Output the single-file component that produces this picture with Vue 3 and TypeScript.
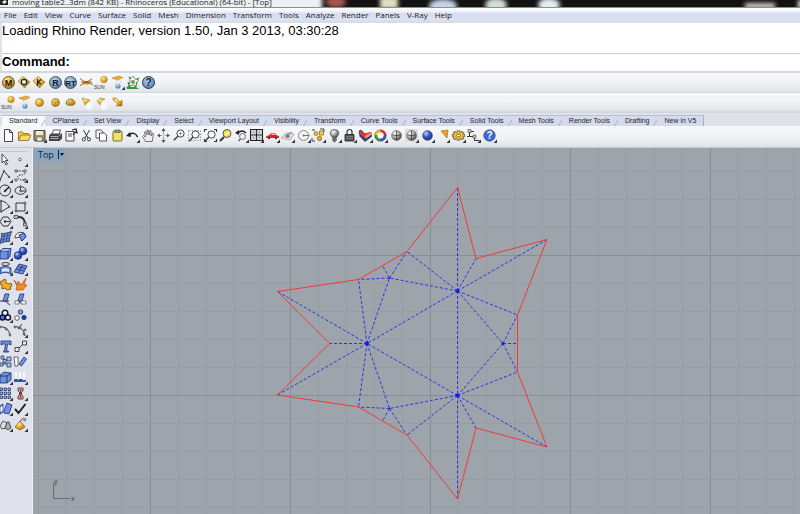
<script setup lang="ts">
interface Tool {
  name: string
  art: string
  fly?: boolean
}

const menus: string[] = ['File', 'Edit', 'View', 'Curve', 'Surface', 'Solid', 'Mesh', 'Dimension', 'Transform', 'Tools', 'Analyze', 'Render', 'Panels', 'V-Ray', 'Help']
const tabs: string[] = ['Standard', 'CPlanes', 'Set View', 'Display', 'Select', 'Viewport Layout', 'Visibility', 'Transform', 'Curve Tools', 'Surface Tools', 'Solid Tools', 'Mesh Tools', 'Render Tools', 'Drafting', 'New in V5']

const t = (name: string, art: string, fly = false): Tool => ({ name, art, fly })

const flyout = '<path d="M15 11.500v3.500h-3.500z" fill="#333"/>'
const draw = (tool: Tool): string => tool.art + (tool.fly ? flyout : '')

const ball = (fill: string, x = 7.5, y = 7.5, r = 4): string =>
  `<circle cx="${x}" cy="${y}" r="${r}" fill="url(#${fill})" stroke="#5d4a20" stroke-width=".4"/>`
const badge = (fill: string, label: string, size = 9): string =>
  `<circle cx="7.5" cy="7.5" r="6" fill="url(#${fill})" stroke="#3a3a38" stroke-width=".8"/><text x="7.5" y="10.7" text-anchor="middle" font-size="${size}" font-weight="700" fill="#181818">${label}</text>`
const gem = (inner: string): string =>
  `<path d="M1 6 6 1.5l7 5.5-5.500 6z" fill="url(#gold)" stroke="#9b7012" stroke-width=".6"/>${inner}`
const sun = `<circle cx="10" cy="4.500" r="3.300" fill="url(#gold)" stroke="#a87815" stroke-width=".4"/><text x="0" y="14" font-size="5" fill="#333">SUN</text>`
const lamp = `<path d="M2 3 9 1l4 1.500-6 2.500z" fill="#efae2b" stroke="#a97410" stroke-width=".5"/><path d="M8 4 5 8M9 4l2 4" stroke="#cbb98b" stroke-width=".5"/><circle cx="8" cy="11" r="2.600" fill="url(#blue)"/>`
const lens = (cx: number, cy: number): string =>
  `<circle cx="${cx}" cy="${cy}" r="3.600" fill="#f7fafc" stroke="#444" stroke-width="1"/><path d="m${cx - 2.7} ${cy + 2.7}-4 4" stroke="#444" stroke-width="1.600"/>`
const dots = (pts: number[][], r = 1.2): string =>
  pts.map(([x, y]) => `<circle cx="${x}" cy="${y}" r="${r}" fill="#eee" stroke="#333" stroke-width=".8"/>`).join('')

const renderTools: Tool[] = [
  t('V-Ray materials', badge('gold', 'M')),
  t('V-Ray options', gem('<circle cx="7" cy="7" r="2.700" fill="#eee" stroke="#222" stroke-width="1.200"/>')),
  t('V-Ray frame buffer', gem('<path d="m5.500 11 0-7M5.500 7.500 9 4.500M5.500 7 9 9" fill="none" stroke="#222" stroke-width="1.300"/>')),
  t('Render', badge('sky', 'R')),
  t('Real-time render', badge('sky', 'RT', 8)),
  t('Infinite plane', '<path d="m2 8 5-2 6 1-5 3z" fill="#e9a42b"/><path d="M1 3.500c3 3 9 5 13 6M13 4C9 6 5 9 1 10.500M2 7h11" fill="none" stroke="#7c5510" stroke-width=".8"/>'),
  t('Sun', sun),
  t('Dome light', lamp, true),
  t('Grass', '<path d="M1 14h13l-3-2H4z" fill="#2f9938"/><path d="M2 13 9 6m0 0 5-3M8 7 4 2m6 10 2-5M5 12 3 7" stroke="#35843a" stroke-width="1.300"/><path d="m5 4 3-3 2 3 4 1-3 3 1 3-4-1-4 1 1-4z" fill="#f4f5ec" stroke="#4f6f4d" stroke-width=".7"/><circle cx="8" cy="7" r="2" fill="#63a45b"/>'),
  t('Help', '<circle cx="7.500" cy="7.500" r="6" fill="url(#sky)" stroke="#26364c" stroke-width="1"/><text x="7.500" y="11" text-anchor="middle" font-size="10" font-weight="700" fill="#181c24">?</text>'),
]

const lightTools: Tool[] = [
  t('Sun light', sun),
  t('Dome', lamp),
  t('Omni light', ball('gold')),
  t('Sphere light', ball('gold') + '<path d="M4 6c2 2 5 2 7 0M7 3.500v8" fill="none" stroke="#a27516" stroke-width=".6"/>'),
  t('Hemisphere', '<path d="M3 8.500a4.500 4.500 0 0 1 9 0c-1 2.500-8 2.500-9 0z" fill="url(#gold)" stroke="#735414" stroke-width=".7"/><path d="M6 9V5.500M9 9V5.500" stroke="#87641a" stroke-width=".7"/>'),
  t('Spot light', '<circle cx="10" cy="11" r="3.500" fill="#f8f8f6"/><path d="M3 3l8 2-5 5z" fill="url(#gold)" stroke="#a87815" stroke-width=".5"/>'),
  t('IES light', '<circle cx="10" cy="11" r="3.500" fill="#f8f8f6"/><path d="M3 6 6 3l5 1-4 2-1 4z" fill="url(#gold)" stroke="#a87815" stroke-width=".5"/>'),
  t('Directional light', '<path d="M3 3h3l4 4 2-2v6H6l2-2-5-4z" fill="url(#gold)" stroke="#a87815" stroke-width=".6"/>'),
]

const mainTools: Tool[] = [
  t('New', '<path d="M3.500 1.500h5l3 3v9h-8zM8.500 1.500v3h3" fill="#fff" stroke="#333" stroke-width=".9"/>'),
  t('Open', '<path d="M1.500 12V4h4l1 1.500h5V7" fill="#f4cf4a" stroke="#8a6512" stroke-width=".8"/><path d="M1.500 12.500 4 7h10l-2.500 5.500z" fill="#f9d967" stroke="#8a6512" stroke-width=".8"/>'),
  t('Save', '<path d="M2 2.500h11v10.500H3l-1-1z" fill="#9e9760" stroke="#3c3b27" stroke-width=".9"/><path d="M4 3h7v4H4z" fill="#e8ead9"/><path d="M5 9h5v4H5z" fill="#eee" stroke="#444" stroke-width=".5"/>', true),
  t('Print', '<path d="m4 6 1.500-4h7L11 6" fill="#fff" stroke="#333" stroke-width=".8"/><path d="M1 7.500 3 5.500h11v5L11.500 13H1z" fill="#444"/><path d="M2.500 8.500h8M2.500 10.500h8M11 8l2-2" stroke="#bbb" stroke-width=".9"/>'),
  t('Document properties', '<path d="M3 3.500h8v9.500H3zM5 6h4M5 8h4" fill="#fff" stroke="#333" stroke-width=".9"/><path d="m9 2 4-1 1 4-2-1-2 3" fill="none" stroke="#222" stroke-width="1.200"/>'),
  t('Cut', '<path d="m4.500 2 4.500 8M10.500 2 6 10" stroke="#333" stroke-width="1"/><circle cx="4.800" cy="11.300" r="1.600" fill="none" stroke="#333" stroke-width=".9"/><circle cx="10" cy="11.300" r="1.600" fill="none" stroke="#333" stroke-width=".9"/>'),
  t('Copy', '<path d="M2 2h5l2 2v6H2z" fill="#fff" stroke="#444" stroke-width=".9"/><path d="M5.500 5h5l2 2v6h-7z" fill="#fff" stroke="#444" stroke-width=".9"/>'),
  t('Paste', '<rect x="3" y="3" width="9" height="10" rx="1" fill="#f3e365" stroke="#6d611f" stroke-width=".9"/><path d="M5 2h5v2.500H5z" fill="#999" stroke="#444" stroke-width=".6"/>'),
  t('Undo', '<path d="M4 7c3-3 7-2 8.500 2" fill="none" stroke="#222" stroke-width="1.500"/><path d="m1 8 4-4 1 5z" fill="#222"/>', true),
  t('Pan', '<path d="M4.500 13.500 1.500 8.500l1-1 2 1.500-1-5 1-.6L6 7l0-5h1.300l.7 5 1-4.500 1 .3L10 8l1.500-3 1 .5-1.300 8z" fill="#eee" stroke="#555" stroke-width=".8"/>'),
  t('Rotate view', '<path d="M7.500 1v13M2 7.500h11" stroke="#999"/><path d="m7.500 0 2 3h-4zM7.500 15l2-3h-4zM1 7.500l3-2v4zM14 7.500l-3-2v4z" fill="#555"/><circle cx="7.500" cy="7.500" r="1.500" fill="#ddd"/>'),
  t('Zoom dynamic', lens(8.5, 5.5) + '<path d="M7 5.500h3M8.500 4v3" stroke="#555" stroke-width=".6"/>'),
  t('Zoom window', '<path d="M1.500 2.500h12v10h-12z" fill="none" stroke="#777" stroke-dasharray="1.500 1.500" stroke-width=".7"/>' + lens(8.5, 6.5)),
  t('Zoom extents', '<path d="M1.500 4V1.500H4M11 1.500h2.500V4M13.500 11v2.500H11M4 13.500H1.500V11" fill="none" stroke="#333" stroke-width="1.100"/>' + lens(8.5, 6.5)),
  t('Zoom selected', '<path d="m2 13 4-4" stroke="#333" stroke-width="2"/><circle cx="9" cy="5.500" r="4" fill="#f4e23d" stroke="#555"/><path d="m7 7 4-3" stroke="#fff" stroke-width="1.200"/>'),
  t('Undo view', '<path d="M4 5c3-3 6-2 8 0" fill="none" stroke="#222" stroke-width="1.300"/><path d="m1 5 4-3v5z" fill="#222"/><circle cx="8.500" cy="8.500" r="3" fill="#eee" stroke="#555" stroke-width=".8"/><path d="m6.500 11-2 2" stroke="#555" stroke-width="1.300"/>', true),
  t('Four viewports', '<path d="M1.500 1.500h12v11h-12zM7.500 1.500v11M1.500 7h12" fill="#d6dadf" stroke="#222" stroke-width="1.100"/><path d="M4.500 2v10M10.500 2v10M2 4.300h11M2 9.700h11" stroke="#a2a6ab" stroke-width=".5"/>', true),
  t('Right view', '<path d="M1 8.500 4.500 7 6 5h4l1 2 3 1v2H1z" fill="#dc2321"/><path d="M6 7h4L9.500 5.500h-3z" fill="#f6c5c2"/><circle cx="4" cy="10" r="1.200" fill="#444"/><circle cx="11" cy="10" r="1.200" fill="#444"/>', true),
  t('Set CPlane', '<path d="m1 10 5-5 8 1-4 6z" fill="#ddd" stroke="#aaa" stroke-width=".8"/><path d="m3 8 9 1M5 11l5-6" stroke="#bbb" stroke-width=".8"/><circle cx="7.500" cy="8" r="1.500" fill="#a87575" stroke="#555" stroke-width=".6"/><path d="m8 6 4-2" stroke="#777"/>', true),
  t('Center snap', '<circle cx="7.500" cy="7.500" r="5" fill="none" stroke="#888" stroke-width="1"/><path d="M7.500 7.500h6" stroke="#777"/><circle cx="7.500" cy="7.500" r="1" fill="#777"/>', true),
  t('Select', '<path d="M1 2h3M9 1h4v3M1 10v3h3" fill="none" stroke="#444"/><path d="M8.500 3h4v4h-4z" fill="#f3cf40" stroke="#7b5d11" stroke-width=".7"/><circle cx="5" cy="5.500" r="1.900" fill="#f1c53a" stroke="#7b5d11" stroke-width=".7"/><circle cx="8.500" cy="10.500" r="2.200" fill="#e7ae2b" stroke="#7b5d11" stroke-width=".7"/>', true),
  t('Hide', '<path d="M5.500 9.500C1.500 5 3.500 1.500 7.500 1.500S13.500 5 9.500 9.500z" fill="url(#grey)" stroke="#555" stroke-width=".8"/><path d="M5.700 10.500h3.600v2L7.500 14l-1.800-1.500z" fill="#777" stroke="#333" stroke-width=".6"/>', true),
  t('Lock', '<path d="M5 7V4a2.500 2.500 0 0 1 5 0v3" fill="none" stroke="#333" stroke-width="1.200"/><path d="M3 6.500h9v6.500H3z" fill="#555" stroke="#222" stroke-width=".8"/><path d="M4 8.500h7M4 10.500h7" stroke="#999" stroke-width=".6"/>', true),
  t('Layers', '<path d="m1 3 2-1 4 4 6-1.500.5 4L7 13.500 2 8.500z" fill="#243d9e" stroke="#222" stroke-width=".6"/><path d="m1.500 3 1-.500L7 5.500l6-1.500v3L7.500 11 2 6z" fill="#e4372a"/><path d="m7 8 6-3.500v2.500L8 10.500z" fill="#f29a5c"/>', true),
  t('Object properties', '<circle cx="7.500" cy="7.500" r="4.500" fill="#fff" stroke="#e3272c" stroke-width="2.500"/><path d="M3 7.500a4.500 4.500 0 0 1 4.500-4.500" fill="none" stroke="#edcf27" stroke-width="2.500"/><path d="M3 7.500A4.500 4.500 0 0 0 7.500 12" fill="none" stroke="#23a551" stroke-width="2.500"/><path d="M7.500 12a4.500 4.500 0 0 0 4.500-4.500" fill="none" stroke="#315be0" stroke-width="2.500"/><circle cx="7.500" cy="7.500" r="5.800" fill="none" stroke="#333" stroke-width=".4"/>', true),
  t('Shade', ball('grey', 7.5, 7.5, 5) + '<path d="M7.500 2.500v10M3 6.500c2 1.500 7 1.500 9 0" fill="none" stroke="#333" stroke-width=".7"/>'),
  t('Shaded display', '<path d="M1 1h13v13H1z" fill="#dcdde0"/>' + ball('grey', 7.5, 7.5, 5) + '<path d="M7.500 2.500v10M3 6.500c2 1.500 7 1.500 9 0" fill="none" stroke="#333" stroke-width=".7"/>', true),
  t('Render preview', ball('royal', 7.5, 7.5, 5), true),
  t('Lights', '<path d="m6 3 7-1-1 8z" fill="#ef9b28" stroke="#9c6618" stroke-width=".6"/>', true),
  t('Options', '<g transform="translate(7.500 7.500) scale(1.200 .9)"><path d="M0-5.500v11M-5.500 0h11M-4-4l8 8M4-4l-8 8" stroke="#624710" stroke-width="3"/><path d="M0-5v10M-5 0h10M-3.700-3.700l7.400 7.400M3.700-3.700l-7.400 7.400" stroke="#e2ae38" stroke-width="1.700"/><circle r="3.700" fill="#e6bc4c"/><circle r="1.500" fill="#fff" stroke="#5a430f" stroke-width=".7"/></g>', true),
  t('Dimension', '<path d="M3.500 3.500v5h5v4h5M4 3.500h4M3 8.500H1" fill="none" stroke="#333" stroke-width="1"/><path d="M2 1.500h3v3H2zM7 7h3v3H7z" fill="#ccc" stroke="#444" stroke-width=".6"/>', true),
  t('Help topics', '<circle cx="7.500" cy="7.500" r="5.800" fill="#3f66d4" stroke="#34438a" stroke-width=".6"/><text x="7.500" y="11" text-anchor="middle" font-size="10" font-weight="700" fill="#fff">?</text>', true),
]

const B = 'fill="#6f91e2" stroke="#1b2c6c" stroke-width=".8"'
const L = 'fill="none" stroke="#333" stroke-width="1"'
const sideTools: Tool[] = [
  t('Pointer', '<path d="M4 2v9l2-2 2 4 1.500-1-2-3.500H10z" fill="#fff" stroke="#333" stroke-width=".9"/>'),
  t('Point', '<circle cx="7" cy="7.500" r="1.300" fill="#fff" stroke="#444" stroke-width=".8"/>', true),
  t('Polyline', `<path d="m2 12 4-9 6 7" ${L}/>` + dots([[2, 12], [6, 3], [11, 9]], 0.8), true),
  t('Control point curve', `<path d="M4 3h7c3 1 1 4-3 4s-5 3 0 5h3" ${L} stroke-dasharray="1.500 1"/>` + dots([[3, 3], [12, 3], [3, 12], [12, 12]]), true),
  t('Circle', `<circle cx="7" cy="7.500" r="5.500" ${L}/><path d="m7 8 4-4" stroke="#222" stroke-width="1.500"/><circle cx="7" cy="8" r="1.200" fill="#333"/>`, true),
  t('Ellipse', `<ellipse cx="7.500" cy="7.500" rx="5.500" ry="3.800" ${L}/><path d="M7.500 3v5h5" ${L}/>` + dots([[7.5, 3.5], [7.5, 8]], 0.8), true),
  t('Arc', `<path d="M3 2v11M3 2c4 0 7 3 8 6L3 13" ${L}/>` + dots([[3, 2], [3, 12.5], [11, 8]], 0.8), true),
  t('Rectangle', `<path d="M3 4h9v8H3z" ${L}/>` + dots([[3, 12], [12, 4]], 1), true),
  t('Polygon', `<path d="m5 3 5 0 3 4.500L10 12H5L2 7.500zM7 7.500h5" ${L}/><circle cx="7" cy="7.500" r="1.200" fill="#333"/>`, true),
  t('Curve fillet', '<path d="M2 3h4c5 0 6 4 6 8" fill="none" stroke="#333" stroke-width="2"/><path d="M1 1.500h4v3H1zM10.500 9h3v3h-3z" fill="#bbb" stroke="#333" stroke-width=".7"/>', true),
  t('Surface from points', `<path d="m4 4 9-2-2 9-9 2z" ${B}/><path d="M7 3 5 12M10 2.500 8 12M3 7l9-2M2.500 10l9-2" stroke="#2c417e" stroke-width=".7"/>` + dots([[4, 4], [13, 2], [11, 11], [2, 13]], 0.9), true),
  t('Patch', `<path d="M2 8C2 4 6 1 11 3l2 4-4 4-2-4z" fill="#fff" stroke="#333" stroke-width=".9"/><path d="m6 5 5-2 2 4-4 4z" ${B}/>`, true),
  t('Box', `<path d="m2 5 3-2.500h8l-1 8-2.500 2.500H2z" ${B}/><path d="M2 5h8v8M10 5l3-2.500" fill="none" stroke="#1b2c6c" stroke-width=".8"/><path d="M3 5 5.500 3h7L10 4.800z" fill="#a9c1fb"/>`, true),
  t('Spheres', '<circle cx="10" cy="5" r="3.800" fill="url(#royal)" stroke="#1b2c6c" stroke-width=".8"/><circle cx="5" cy="9.500" r="3.800" fill="url(#royal)" stroke="#1b2c6c" stroke-width=".8"/>', true),
  t('Extrude', `<path d="M2 7v6c3-2 7-2 11 0V7c-4-2-8-2-11 0z" ${B}/><ellipse cx="7.500" cy="3" rx="4" ry="1.500" ${L}/><path d="M4 8c2-1 5-1 7 0v3c-2-1-5-1-7 0z" fill="#dce6ff"/>`, true),
  t('Surface mesh', `<path d="m1 11 5-8 8 2-4 8z" ${B}/><path d="m3 8 8 2M4.500 5.500l8 2M5 12l5-8" stroke="#22346d" stroke-width=".8"/>`, true),
  t('Join', '<path d="M3 4h2l1-2 2 1v3l3 1 2-1 1 3-2 1 1 2-4 1-2-2-3 1V8L2 7z" fill="#f3aa24" stroke="#795313" stroke-width=".9"/>'),
  t('Explode', '<path d="m1 3 4 5V4l3 4 5-7-2 7 3 0-4 5H3L4 9z" fill="#f78d1c" stroke="#a34f0e" stroke-width=".7"/>'),
  t('Trim', `<path d="M2 9h9M7 9l5 4" ${L}/><path d="M7 2h4l-2 7H5z" ${B}/>`),
  t('Split', `<path d="M2 10h11" ${L}/><path d="M7 2h4L9 9H5z" ${B}/><path d="M2 9h4v3H2zM8 9h5v3H8z" fill="#fff" stroke="#333" stroke-width=".6"/>`),
  t('Group', '<circle cx="7" cy="5" r="2.800" fill="#fff" stroke="#15193c" stroke-width="1.500"/><circle cx="4.500" cy="9.500" r="2.500" fill="#5275d5" stroke="#15193c" stroke-width="1.500"/><circle cx="10" cy="9.500" r="2.500" fill="#fff" stroke="#15193c" stroke-width="1.500"/>', true),
  t('Ungroup', '<circle cx="7.500" cy="4" r="2.300" fill="#7398ed" stroke="#333" stroke-width=".8"/><circle cx="4" cy="10" r="2.300" fill="#fff" stroke="#333" stroke-width=".8"/><circle cx="11" cy="9.500" r="2.500" fill="#23398e"/>'),
  t('Edit points', `<path d="M2 4c5-1 9 3 10 8" ${L}/>` + dots([[2, 4], [8, 6], [12, 12]], 1)),
  t('Insert points', `<path d="M2 4c5-1 9 3 10 9M9 1 5 6" ${L}/>` + dots([[2, 4], [7, 5], [12, 7], [11, 11]], 1), true),
  t('Text', `<path d="M3 2h10v4l-2-1H9.500l-1 7h2v1h-5v-1h1l1-7H5L3 6z" ${B}/>`),
  t('Move', `<path d="m5 10 5-5" ${L}/><path d="M2 8.500h4v4H2zM9.500 2h4v4h-4z" fill="#eee" stroke="#333" stroke-width=".9"/>`, true),
  t('Copy objects', `<path d="M5 6h4M5 10h4" ${L}/><path d="M3 2h3v3H3zM9 3h4v4H9zM2 9h3v3H2zM9 9h4v4H9zM5 5.500h3v3H5z" fill="#a8c0f8" stroke="#29375e" stroke-width=".8"/>`),
  t('Rotate', `<path d="M1 3h4v9H2z" fill="#fff" stroke="#444" stroke-width=".8"/><path d="m6 10 5-7 2.500 2-5 7z" ${B}/>`),
  t('Scale', `<path d="m2 5 4-3 7 1v7l-4 3H2z" ${B}/><path d="M2 6h7v7M9 6l4-3" fill="none" stroke="#23376b"/>`, true),
  t('Analyze direction', '<path d="M3 2v7M7 2v7M11 2v7" stroke="#fff" stroke-width="1.500"/><path d="M1 11h12" stroke="#3759c9" stroke-width="2"/><path d="m1 9 2 3 2-3zM5.500 9l2 3 2-3z" fill="#354887"/>', true),
  t('Array', [2, 6, 10].map((x) => [2, 6, 10].map((y) => `<path d="M${x} ${y}h2.500v2.500h-2.500z" fill="#a8bcf0" stroke="#25355f" stroke-width=".8"/>`).join('')).join(''), true),
  t('Align', '<path d="M5 2h5v3l-1.500 1v3L10 10v3H5v-3l1.500-1V6L5 5z" fill="#ddd" stroke="#333" stroke-width=".9"/><path d="M7.500 3v10" stroke="#d1282a" stroke-width="1"/><path d="M6 4h3M6 11h3" stroke="#d1282a"/>', true),
  t('Bend', `<path d="m2 5 3-2v8l-3 2zM6 10l3-8 5 2-3 9-5-1z" ${B}/><path d="m2.500 6 2-1v5l-2 1z" fill="#fff"/>`, true),
  t('Check', '<path d="m2 8 3.500 4L12.500 3" fill="none" stroke="#222" stroke-width="2"/>', true),
  t('Primitives', '<path d="m2 9 3-5 4 2-1 5-4 1z" fill="#ddd" stroke="#333" stroke-width=".8"/><path d="m7 11 2-6h2l2 6-3 2z" fill="#aaa" stroke="#333" stroke-width=".8"/>', true),
  t('Cone', '<path d="m2 10 5-6 5 6-5 3z" fill="url(#gold)" stroke="#8b611b" stroke-width=".8"/><path d="M8 4c0-3 3-3 5-2l-1 2-2-1" fill="#ddd" stroke="#333" stroke-width=".8"/>', true),
]

const step = 28
const lineXs: number[] = Array.from({ length: 60 }, (_, i) => 38 + i * step)
const lineYs: number[] = Array.from({ length: 40 }, (_, i) => 171 + i * step)
const majorX = (i: number): boolean => i % 5 === 4
const majorY = (i: number): boolean => i % 5 === 3

const outline = '457.5,187.5 476,258.5 547,239.5 517.5,315 517.5,372 547,447 476,428 457.5,499 407,435 358.5,407 277.5,395 329.5,343.5 277.5,291.5 358.5,279.5 407,251.5'

const a = [457.5, 291]
const b = [457.5, 395.5]
const c = [367, 343.5]
const links = (from: number[], to: number[][]): string => to.map((p) => `M${from} L${p}`).join(' ')
const folds: string = [
  links(a, [[457.5, 187.5], [476, 258.5], [547, 239.5], [517.5, 315], [503, 343.5], b, c, [389.5, 278], [407, 251.5]]),
  links(b, [[457.5, 499], [476, 428], [547, 447], [517.5, 372], [503, 343.5], c, [389.5, 408.5], [407, 435]]),
  links(c, [[277.5, 291.5], [277.5, 395], [329.5, 343.5], [358.5, 279.5], [389.5, 278], [389.5, 408.5], [358.5, 407]]),
  links([389.5, 278], [[358.5, 279.5], [382.5, 265.5], [407, 251.5]]),
  links([389.5, 408.5], [[358.5, 407], [382.5, 421], [407, 435]]),
  links([503, 343.5], [[517.5, 315], [517.5, 343.5], [517.5, 372]]),
].join(' ')
const hubs: number[][] = [[...a, 2], [...b, 2], [...c, 2], [389.5, 278, 1], [389.5, 408.5, 1], [503, 343.5, 1.5]]
</script>

<template>
  <div class="app">
    <svg class="defs" aria-hidden="true">
      <defs>
        <radialGradient id="gold" cx=".35" cy=".3" r=".8"><stop offset="0" stop-color="#fff0a0" /><stop offset=".45" stop-color="#f0b32a" /><stop offset="1" stop-color="#a86c0c" /></radialGradient>
        <radialGradient id="sky" cx=".4" cy=".3" r=".8"><stop offset="0" stop-color="#b5d5f5" /><stop offset="1" stop-color="#3f73ad" /></radialGradient>
        <radialGradient id="blue" cx=".4" cy=".3" r=".8"><stop offset="0" stop-color="#bfe0f5" /><stop offset="1" stop-color="#2a6fa8" /></radialGradient>
        <radialGradient id="royal" cx=".35" cy=".3" r=".8"><stop offset="0" stop-color="#c3d4ff" /><stop offset=".4" stop-color="#3c62d6" /><stop offset="1" stop-color="#14246c" /></radialGradient>
        <radialGradient id="grey" cx=".35" cy=".3" r=".8"><stop offset="0" stop-color="#fff" /><stop offset=".5" stop-color="#a5a5a8" /><stop offset="1" stop-color="#2f2f32" /></radialGradient>
        <filter id="soft"><feGaussianBlur stdDeviation="2" /></filter>
      </defs>
    </svg>

    <header class="title">
      <svg class="backdrop" aria-hidden="true">
        <rect width="100%" height="8" fill="#121212" />
        <g filter="url(#soft)">
          <rect x="-10" y="-6" width="332" height="20" fill="#eef1f3" />
          <ellipse cx="336" cy="2" rx="10" ry="6" fill="#a6584e" />
          <rect x="380" y="-3" width="18" height="12" fill="#e4dfc0" />
          <ellipse cx="443" cy="6" rx="14" ry="7" fill="#c3d5e8" />
          <ellipse cx="496" cy="5" rx="11" ry="7" fill="#cfe0d2" />
          <ellipse cx="549" cy="5" rx="11" ry="7" fill="#e4eeee" />
          <rect x="745" y="3" width="30" height="6" fill="#cfc8c6" />
          <rect x="798" y="0" width="8" height="9" fill="#ddd" />
        </g>
        <path d="M0 0h8v5H0z" fill="#222" /><path d="m2 2 3-2 2 2-3 2z" fill="#eee" />
      </svg>
      <span class="title-text">moving table2..3dm (842 KB) - Rhinoceros (Educational) (64-bit) - [Top]</span>
    </header>

    <nav class="menu">
      <a v-for="m in menus" :key="m" href="#">{{ m }}</a>
    </nav>

    <section class="command">
      <div class="history">Loading Rhino Render, version 1.50, Jan  3 2013, 03:30:28</div>
      <label class="prompt">Command:<input type="text" /></label>
    </section>

    <div class="bar bar-render">
      <div class="tools ten">
        <button v-for="tool in renderTools" :key="tool.name" type="button" :aria-label="tool.name">
          <svg viewBox="0 0 15 15" v-html="draw(tool)" />
        </button>
      </div>
    </div>
    <div class="bar bar-light">
      <div class="tools eight">
        <button v-for="tool in lightTools" :key="tool.name" type="button" :aria-label="tool.name">
          <svg viewBox="0 0 15 15" v-html="draw(tool)" />
        </button>
      </div>
    </div>

    <div class="tabs" role="tablist">
      <button v-for="(tab, i) in tabs" :key="tab" type="button" role="tab" :class="{ active: i === 0 }" :aria-selected="i === 0">{{ tab }}</button>
    </div>

    <div class="bar bar-main">
      <div class="tools main">
        <button v-for="tool in mainTools" :key="tool.name" type="button" :aria-label="tool.name">
          <svg viewBox="0 0 15 15" v-html="draw(tool)" />
        </button>
      </div>
    </div>

    <div class="work">
      <aside class="side">
        <div class="side-grid">
          <button v-for="tool in sideTools" :key="tool.name" type="button" :aria-label="tool.name">
            <svg viewBox="0 0 15 15" v-html="draw(tool)" />
          </button>
        </div>
      </aside>

      <main class="viewport">
        <svg class="canvas" aria-label="Top viewport">
          <g transform="translate(-33 -148)">
            <line v-for="(x, i) in lineXs" :key="'x' + i" :x1="x + 0.5" :x2="x + 0.5" y1="148" y2="1300" :class="majorX(i) ? 'major' : 'minor'" />
            <line v-for="(y, i) in lineYs" :key="'y' + i" x1="33" x2="1800" :y1="y + 0.5" :y2="y + 0.5" :class="majorY(i) ? 'major' : 'minor'" />
            <path :d="folds" class="fold" />
            <polygon :points="outline" class="outline" />
            <circle v-for="(h, i) in hubs" :key="'h' + i" :cx="h[0]" :cy="h[1]" :r="h[2]" fill="#1a1ae6" />
          </g>
        </svg>
        <button type="button" class="view-name"><span>Top</span><i></i></button>
        <svg class="axes" viewBox="0 0 24 24" aria-hidden="true">
          <path d="M1.500 4v15.500H18" />
          <text x="2" y="5">y</text>
          <text x="19" y="22">x</text>
        </svg>
      </main>
    </div>
  </div>
</template>

<style>
html,
body {
  margin: 0;
  overflow: hidden;
}
</style>

<style scoped>
.app {
  display: flex;
  flex-direction: column;
  height: 100vh;
  background: #e3e6ed;
  color: #1c1e24;
  font-family: "Liberation Sans", Arial, sans-serif;
}
button {
  appearance: none;
  border: 0;
  margin: 0;
  padding: 0;
  background: none;
  color: inherit;
  font: inherit;
}
.defs {
  position: absolute;
  width: 0;
  height: 0;
}
.title {
  position: relative;
  display: flex;
  align-items: flex-end;
  flex: none;
  height: 7px;
  overflow: hidden;
  border-bottom: 1px solid #8d8f93;
}
.backdrop {
  position: absolute;
  inset: 0;
  width: 100%;
  height: 100%;
}
.title-text {
  position: relative;
  padding-left: 12px;
  font: 8px/10px "Open Sans", "Noto Sans", sans-serif;
  white-space: nowrap;
}
.menu {
  display: flex;
  flex: none;
  gap: 7px;
  padding: 0 4px;
  border-bottom: 2px solid #d8dde4;
  background: linear-gradient(#fff, #f2f4fa 25%, #d6dcef 45%, #dde2f2);
  font: 8px/13px "Open Sans", "Noto Sans", sans-serif;
}
.menu a {
  color: #1c1e24;
  text-decoration: none;
}
.command {
  flex: none;
  padding-left: 2px;
  border-bottom: 2px solid #d3d7df;
  background: #dfe3ec;
}
.history {
  height: 30px;
  background: #fff;
  color: #000;
  font-size: 13px;
  line-height: 15px;
  white-space: pre;
}
.prompt {
  display: flex;
  height: 17px;
  border-top: 1px solid #c6c9cf;
  background: #fff;
  color: #000;
  font-size: 13px;
  font-weight: 700;
  line-height: 15px;
}
.prompt input {
  flex: 1;
  min-width: 0;
  border: 0;
  padding: 0 4px;
  outline: 0;
  background: none;
  font: inherit;
}
.bar {
  flex: none;
  padding-left: 1px;
  background: linear-gradient(#f7f8fa, #f0f2f5 50%, #e0e3e9);
  border-bottom: 1px solid #d2d6de;
}
.tools {
  display: flex;
  height: 100%;
}
.tools button {
  display: flex;
  flex: 1;
  align-items: center;
  justify-content: center;
  min-width: 0;
}
.tools svg,
.side-grid svg {
  flex: none;
  width: 15px;
  height: 15px;
  overflow: visible;
}
.bar-render {
  height: 19px;
}
.bar-light {
  height: 18px;
  border-bottom-width: 2px;
}
.ten {
  width: 155px;
}
.eight {
  width: 124px;
}
.main {
  width: 496px;
}
.tabs {
  display: flex;
  flex: none;
  padding: 2px 0 0 2px;
  background: #dfe2ea;
}
.tabs button {
  position: relative;
  padding: 0 8px 0 7px;
  border-top: 1px solid #b9bfcc;
  background: #d5dbed;
  font-size: 7px;
  line-height: 10px;
  white-space: nowrap;
}
.tabs button::after {
  content: "";
  position: absolute;
  top: 0;
  right: 0;
  width: 1px;
  height: 10px;
  background: #a9afbd;
  transform: skewX(-32deg);
}
.tabs button:last-child::after {
  transform: none;
}
.tabs .active {
  background: #f8f9fb;
}
.bar-main {
  height: 18px;
  padding-bottom: 3px;
  border-bottom-color: #c3c8d0;
}
.work {
  display: flex;
  flex: 1;
  min-height: 0;
}
.side {
  box-sizing: border-box;
  width: 33px;
  flex: none;
  padding-top: 3px;
  border-right: 1px solid #f1f3f7;
  background: #dfe2eb;
  overflow: hidden;
}
.side-grid {
  display: grid;
  grid-template-columns: 1fr 1fr;
  grid-template-rows: repeat(18, 1fr);
  height: 280px;
  margin: 0 4px 0 -2px;
  border-top: 1px solid #c3c8d4;
}
.side-grid button {
  display: flex;
  align-items: center;
  justify-content: center;
  min-width: 0;
  min-height: 0;
}
.viewport {
  position: relative;
  flex: 1;
  background: #9da4ab;
  overflow: hidden;
}
.canvas {
  position: absolute;
  inset: 0;
  width: 100%;
  height: 100%;
}
.minor {
  stroke: #969da4;
}
.major {
  stroke: #888e96;
}
.fold {
  fill: none;
  stroke: #3030dc;
  stroke-width: 1;
  stroke-dasharray: 3 2;
}
.outline {
  fill: none;
  stroke: #ee3a3e;
  stroke-width: 1;
}
.view-name {
  position: absolute;
  top: 0;
  left: 1px;
  display: flex;
  align-items: center;
  gap: 4px;
  padding: 0 1px 0 4px;
  background: #88a6c4;
  font: 9px/13px "Open Sans", "Noto Sans", sans-serif;
}
.view-name i {
  width: 0;
  height: 9px;
  border-left: 1px solid #222;
  position: relative;
  margin-right: 4px;
}
.view-name i::after {
  content: "";
  position: absolute;
  top: 3px;
  left: 1px;
  border: 2px solid transparent;
  border-top: 3px solid #111;
}
.axes {
  position: absolute;
  bottom: 11px;
  left: 19px;
  width: 24px;
  height: 24px;
  overflow: visible;
  font-size: 7px;
}
.axes path {
  fill: none;
  stroke: #686d73;
}
.axes text {
  fill: #44484d;
}
</style>
